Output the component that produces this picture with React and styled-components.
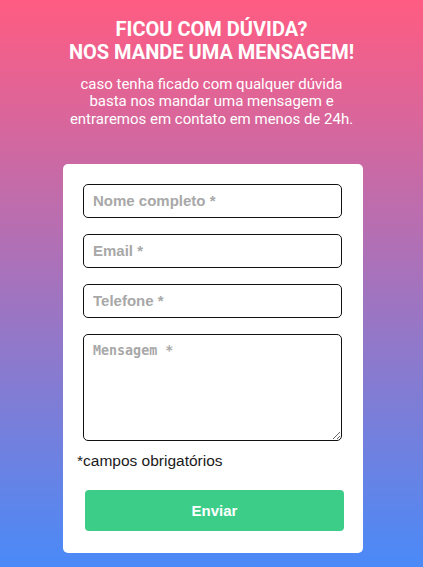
import React from "react";
import styled, { createGlobalStyle } from "styled-components";

const Global = createGlobalStyle`
  html, body { margin: 0; padding: 0; }
  body {
    min-height: 567px;
    background: linear-gradient(180deg, #ff5c82 0%, #4a8af8 100%);
    font-family: Roboto, "Liberation Sans", sans-serif;
  }
  * { box-sizing: border-box; }
`;

const Page = styled.main`
  min-height: 567px;
  padding-top: 18px;
  display: flex;
  flex-direction: column;
  align-items: center;
`;

const Title = styled.h1`
  margin: 0;
  font-family: Roboto, sans-serif;
  font-weight: 700;
  font-size: 20px;
  line-height: 23.4px;
  color: #fff;
  text-align: center;
`;

const Lead = styled.p`
  margin: 11px 0 0;
  max-width: 292px;
  font-family: Roboto, sans-serif;
  font-size: 15px;
  line-height: 17.6px;
  color: #fff;
  text-align: center;
`;

const Card = styled.form`
  margin: 35px 0 0 3px;
  width: 300px;
  background: #fff;
  border-radius: 5px;
  padding: 20px 19px 22px 14px;
  display: flex;
  flex-direction: column;
`;

const Input = styled.input`
  display: block;
  margin: 0 0 16px 6px;
  width: 259px;
  height: 34px;
  border: 1px solid #111;
  border-radius: 5px;
  padding: 0 9px;
  font-family: "Liberation Sans", Arial, sans-serif;
  font-weight: 700;
  font-size: 15px;
  color: #333;
  outline: none;
  &::placeholder { color: #a8a8a8; }
`;

const TextArea = styled.textarea`
  display: block;
  margin: 0 0 11px 6px;
  width: 259px;
  height: 107px;
  border: 1px solid #111;
  border-radius: 5px;
  padding: 8px 9px;
  font-family: "DejaVu Sans Mono", monospace;
  font-weight: 700;
  font-size: 13.33px;
  color: #333;
  outline: none;
  &::placeholder { color: #a8a8a8; }
`;

const Note = styled.span`
  font-family: "Liberation Sans", Arial, sans-serif;
  font-size: 15.5px;
  line-height: 18px;
  color: #1a1a1a;
`;

const Submit = styled.button`
  margin: 20px 0 0 8px;
  width: 259px;
  height: 41px;
  border: none;
  border-radius: 4px;
  background: #3ccd89;
  color: #fff;
  font-family: "Liberation Sans", Arial, sans-serif;
  font-weight: 700;
  font-size: 15px;
  cursor: pointer;
`;

export default function App() {
  return (
    <>
      <Global />
      <Page>
        <Title>
          FICOU COM DÚVIDA?
          <br />
          NOS MANDE UMA MENSAGEM!
        </Title>
        <Lead>
          caso tenha ficado com qualquer dúvida basta nos mandar uma mensagem e
          entraremos em contato em menos de 24h.
        </Lead>
        <Card onSubmit={(e) => e.preventDefault()}>
          <Input type="text" placeholder="Nome completo *" />
          <Input type="email" placeholder="Email *" />
          <Input type="tel" placeholder="Telefone *" />
          <TextArea placeholder="Mensagem *" />
          <Note>*campos obrigatórios</Note>
          <Submit type="submit">Enviar</Submit>
        </Card>
      </Page>
    </>
  );
}
